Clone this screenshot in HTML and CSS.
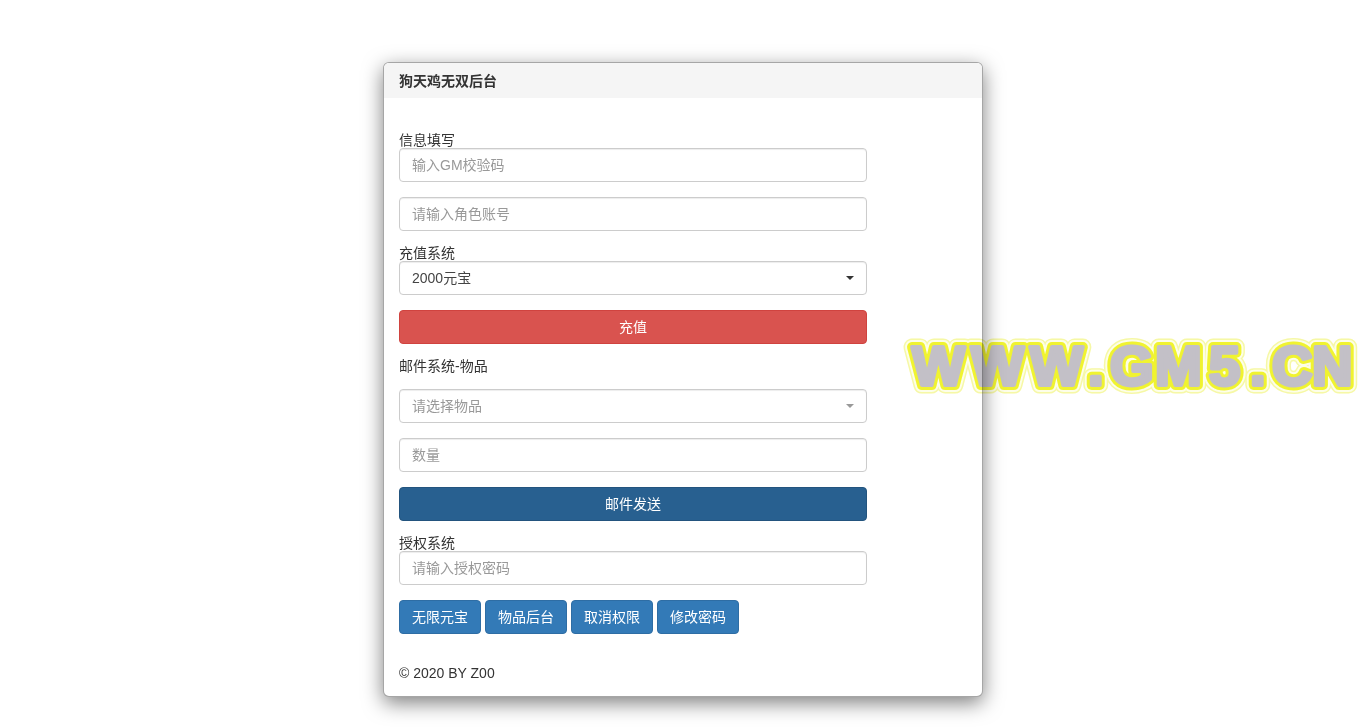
FILE: index.html
```html
<!DOCTYPE html>
<html>
<head>
    <meta charset="utf-8">
    <title>狗天鸡无双后台</title>
    <link rel="stylesheet" href="styles.css">
</head>
<body>
    <div class="panel">
        <div class="panel-heading">狗天鸡无双后台</div>
        <div class="panel-body">
            <form class="main-form">
                <div class="group-label first">信息填写</div>
                <input class="form-control" type="text" placeholder="输入GM校验码">
                <input class="form-control" type="text" placeholder="请输入角色账号">

                <div class="group-label">充值系统</div>
                <div class="form-control select">
                    <span>2000元宝</span>
                    <i class="caret"></i>
                </div>
                <button class="btn btn-block btn-danger" type="button">充值</button>

                <p class="mail-label">邮件系统-物品</p>
                <div class="form-control select placeholder">
                    <span>请选择物品</span>
                    <i class="caret"></i>
                </div>
                <input class="form-control" type="text" placeholder="数量">
                <button class="btn btn-block btn-navy" type="button">邮件发送</button>

                <div class="group-label">授权系统</div>
                <input class="form-control" type="text" placeholder="请输入授权密码">

                <div class="btn-row">
                    <button class="btn btn-primary" type="button">无限元宝</button>
                    <button class="btn btn-primary" type="button">物品后台</button>
                    <button class="btn btn-primary" type="button">取消权限</button>
                    <button class="btn btn-primary" type="button">修改密码</button>
                </div>
            </form>
            <div class="copyright">© 2020 BY Z00</div>
        </div>
    </div>

    <svg class="watermark" width="466" height="80" viewBox="0 0 466 80">
        <defs>
            <text id="wm" x="12 71 130 188 210 255 309 350 372 412" y="62.5">WWW.GM5.CN</text>
        </defs>
        <use href="#wm" class="wm-pale"></use>
        <use href="#wm" class="wm-gap"></use>
        <use href="#wm" class="wm-yellow"></use>
        <use href="#wm" class="wm-grey"></use>
    </svg>
</body>
</html>
```

FILE: styles.css
```css
* {
    box-sizing: border-box;
}
html, body {
    height: 100%;
}
body {
    margin: 0;
    background-color: #fff;
    color: #333;
    font-family: "Liberation Sans", "Noto Sans CJK SC", sans-serif;
    font-size: 14px;
    line-height: 20px;
}
.panel {
    width: 600px;
    margin: 0 auto;
    position: relative;
    top: 62px;
    background-color: #fff;
    border: 1px solid rgba(0, 0, 0, .35);
    border-radius: 6px;
    box-shadow: 0 6px 20px rgba(0, 0, 0, .5);
    overflow: hidden;
}
.panel-heading {
    height: 35px;
    padding: 8px 15px;
    background-color: #f5f5f5;
    font-weight: bold;
}
.panel-body {
    padding: 15px 15px 13px;
}
.main-form {
    width: 468px;
}
.group-label {
    height: 15px;
    line-height: 15px;
}
.group-label.first {
    margin-top: 20px;
}
.form-control {
    display: block;
    width: 100%;
    height: 34px;
    margin-bottom: 15px;
    padding: 6px 12px;
    background-color: #fff;
    border: 1px solid #ccc;
    border-radius: 4px;
    box-shadow: inset 0 1px 1px rgba(0, 0, 0, .075);
    color: #555;
    font-family: inherit;
    font-size: 14px;
    line-height: 20px;
}
.form-control::placeholder {
    color: #999;
    opacity: 1;
}
.select {
    display: flex;
    align-items: center;
    justify-content: space-between;
    color: #444;
}
.select.placeholder {
    color: #999;
}
.caret {
    width: 0;
    height: 0;
    border-top: 4px solid currentColor;
    border-left: 4px solid transparent;
    border-right: 4px solid transparent;
}
.select .caret {
    color: #333;
}
.select.placeholder .caret {
    color: #999;
}
.btn {
    height: 34px;
    padding: 6px 12px;
    border: 1px solid transparent;
    border-radius: 4px;
    color: #fff;
    font-family: inherit;
    font-size: 14px;
    line-height: 20px;
}
.btn-block {
    display: block;
    width: 100%;
    margin-bottom: 15px;
}
.btn-danger {
    background-color: #d9534f;
    border-color: #d0433f;
}
.btn-navy {
    background-color: #286090;
    border-color: #23547e;
}
.btn-primary {
    background-color: #337ab7;
    border-color: #2e6da4;
}
.mail-label {
    height: 30px;
    margin: 0;
    line-height: 15px;
}
.btn-row {
    display: flex;
    gap: 4px;
}
.copyright {
    margin-top: 29px;
}
.watermark {
    position: absolute;
    left: 900px;
    top: 322px;
    mix-blend-mode: multiply;
}
.watermark text {
    font-family: "Liberation Sans", sans-serif;
    font-size: 56px;
    font-weight: bold;
}
.watermark use {
    stroke-linejoin: round;
}
.wm-pale {
    fill: #f6f8a6;
    stroke: #f6f8a6;
    stroke-width: 17px;
}
.wm-gap {
    fill: #fdfee8;
    stroke: #fdfee8;
    stroke-width: 14px;
}
.wm-yellow {
    fill: #f0f330;
    stroke: #f0f330;
    stroke-width: 10px;
}
.wm-grey {
    fill: #c3c0c7;
    stroke: #c3c0c7;
    stroke-width: 4px;
}
```
